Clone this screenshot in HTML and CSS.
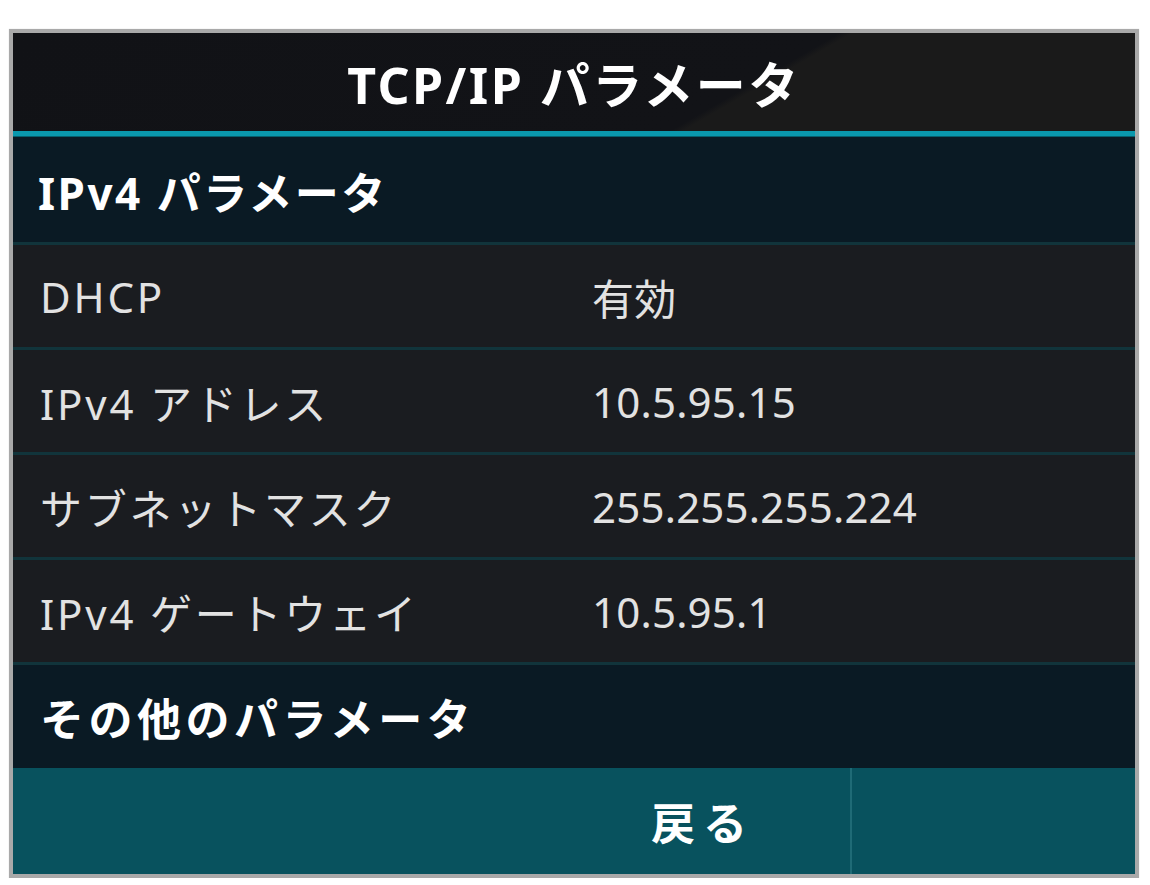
FILE: index.html
```html
<!DOCTYPE html>
<html lang="ja">
  <head>
    <meta charset="UTF-8" />
    <meta name="viewport" content="width=device-width, initial-scale=1.0" />
    <title>TCP/IP パラメータ</title>
    <link rel="stylesheet" href="styles.css">
  </head>
  <body>
    <main class="screen">
      <header class="title-bar">
        <h1>TCP/IP パラメータ</h1>
      </header>
      <div class="accent-line"></div>
      <div class="section first">IPv4 パラメータ</div>
      <ul class="params">
        <li class="row">
          <span class="label">DHCP</span>
          <span class="value">有効</span>
        </li>
        <li class="row">
          <span class="label">IPv4 アドレス</span>
          <span class="value">10.5.95.15</span>
        </li>
        <li class="row">
          <span class="label">サブネットマスク</span>
          <span class="value">255.255.255.224</span>
        </li>
        <li class="row">
          <span class="label">IPv4 ゲートウェイ</span>
          <span class="value">10.5.95.1</span>
        </li>
      </ul>
      <div class="section second">その他のパラメータ</div>
      <footer class="softkeys">
        <div class="key"></div>
        <div class="key"></div>
        <div class="key">戻る</div>
        <div class="key last"></div>
      </footer>
    </main>
  </body>
</html>
```

FILE: styles.css
```css
body {
  margin: 0;
  padding: 0;
  background: #ffffff;
  font-family: "Noto Sans", "Noto Sans CJK JP", sans-serif;
}
.screen {
  box-sizing: border-box;
  width: 1130px;
  height: 849px;
  margin: 29px 0 0 9px;
  border: 4px solid #a9a9a9;
  box-shadow: 0 0 1px #d0d0d0;
  display: flex;
  flex-direction: column;
  background: #1a1c20;
}
.title-bar {
  height: 98px;
  flex-shrink: 0;
  display: flex;
  align-items: center;
  justify-content: center;
  background: linear-gradient(150deg, #111216 0%, #121317 64%, #1a1a1a 65%, #1a1a1a 100%);
}
.title-bar h1 {
  margin: 0;
  color: #ffffff;
  font-size: 50px;
  font-weight: 700;
  letter-spacing: 2.5px;
}
.accent-line {
  height: 5px;
  flex-shrink: 0;
  background: #0a98ad;
  border-bottom: 1px solid #06606e;
}
.section {
  box-sizing: border-box;
  flex-shrink: 0;
  display: flex;
  align-items: center;
  padding-left: 25px;
  background: #0a1a24;
  color: #ffffff;
  font-size: 44px;
  font-weight: 700;
  letter-spacing: 2.5px;
}
.section.first {
  height: 108px;
  padding-top: 3px;
  border-bottom: 3px solid #11343b;
}
.section.second {
  height: 103px;
  padding-left: 27px;
  letter-spacing: 4.5px;
}
.params {
  list-style: none;
  margin: 0;
  padding: 0;
}
.row {
  box-sizing: border-box;
  height: 105px;
  display: grid;
  grid-template-columns: 552px 1fr;
  align-items: center;
  padding-left: 27px;
  border-bottom: 3px solid #11343b;
  color: #e2e2e2;
  font-size: 42px;
}
.label {
  letter-spacing: 2.8px;
}
.value {
  letter-spacing: 0.2px;
}
.softkeys {
  flex: 1;
  display: grid;
  grid-template-columns: 272px 271px 294px 1fr;
  background: #08525e;
}
.key {
  display: flex;
  align-items: center;
  justify-content: center;
  color: #ffffff;
  font-size: 44px;
  font-weight: 700;
  letter-spacing: 8px;
}
.key.last {
  border-left: 2px solid #1f6b76;
}
```
